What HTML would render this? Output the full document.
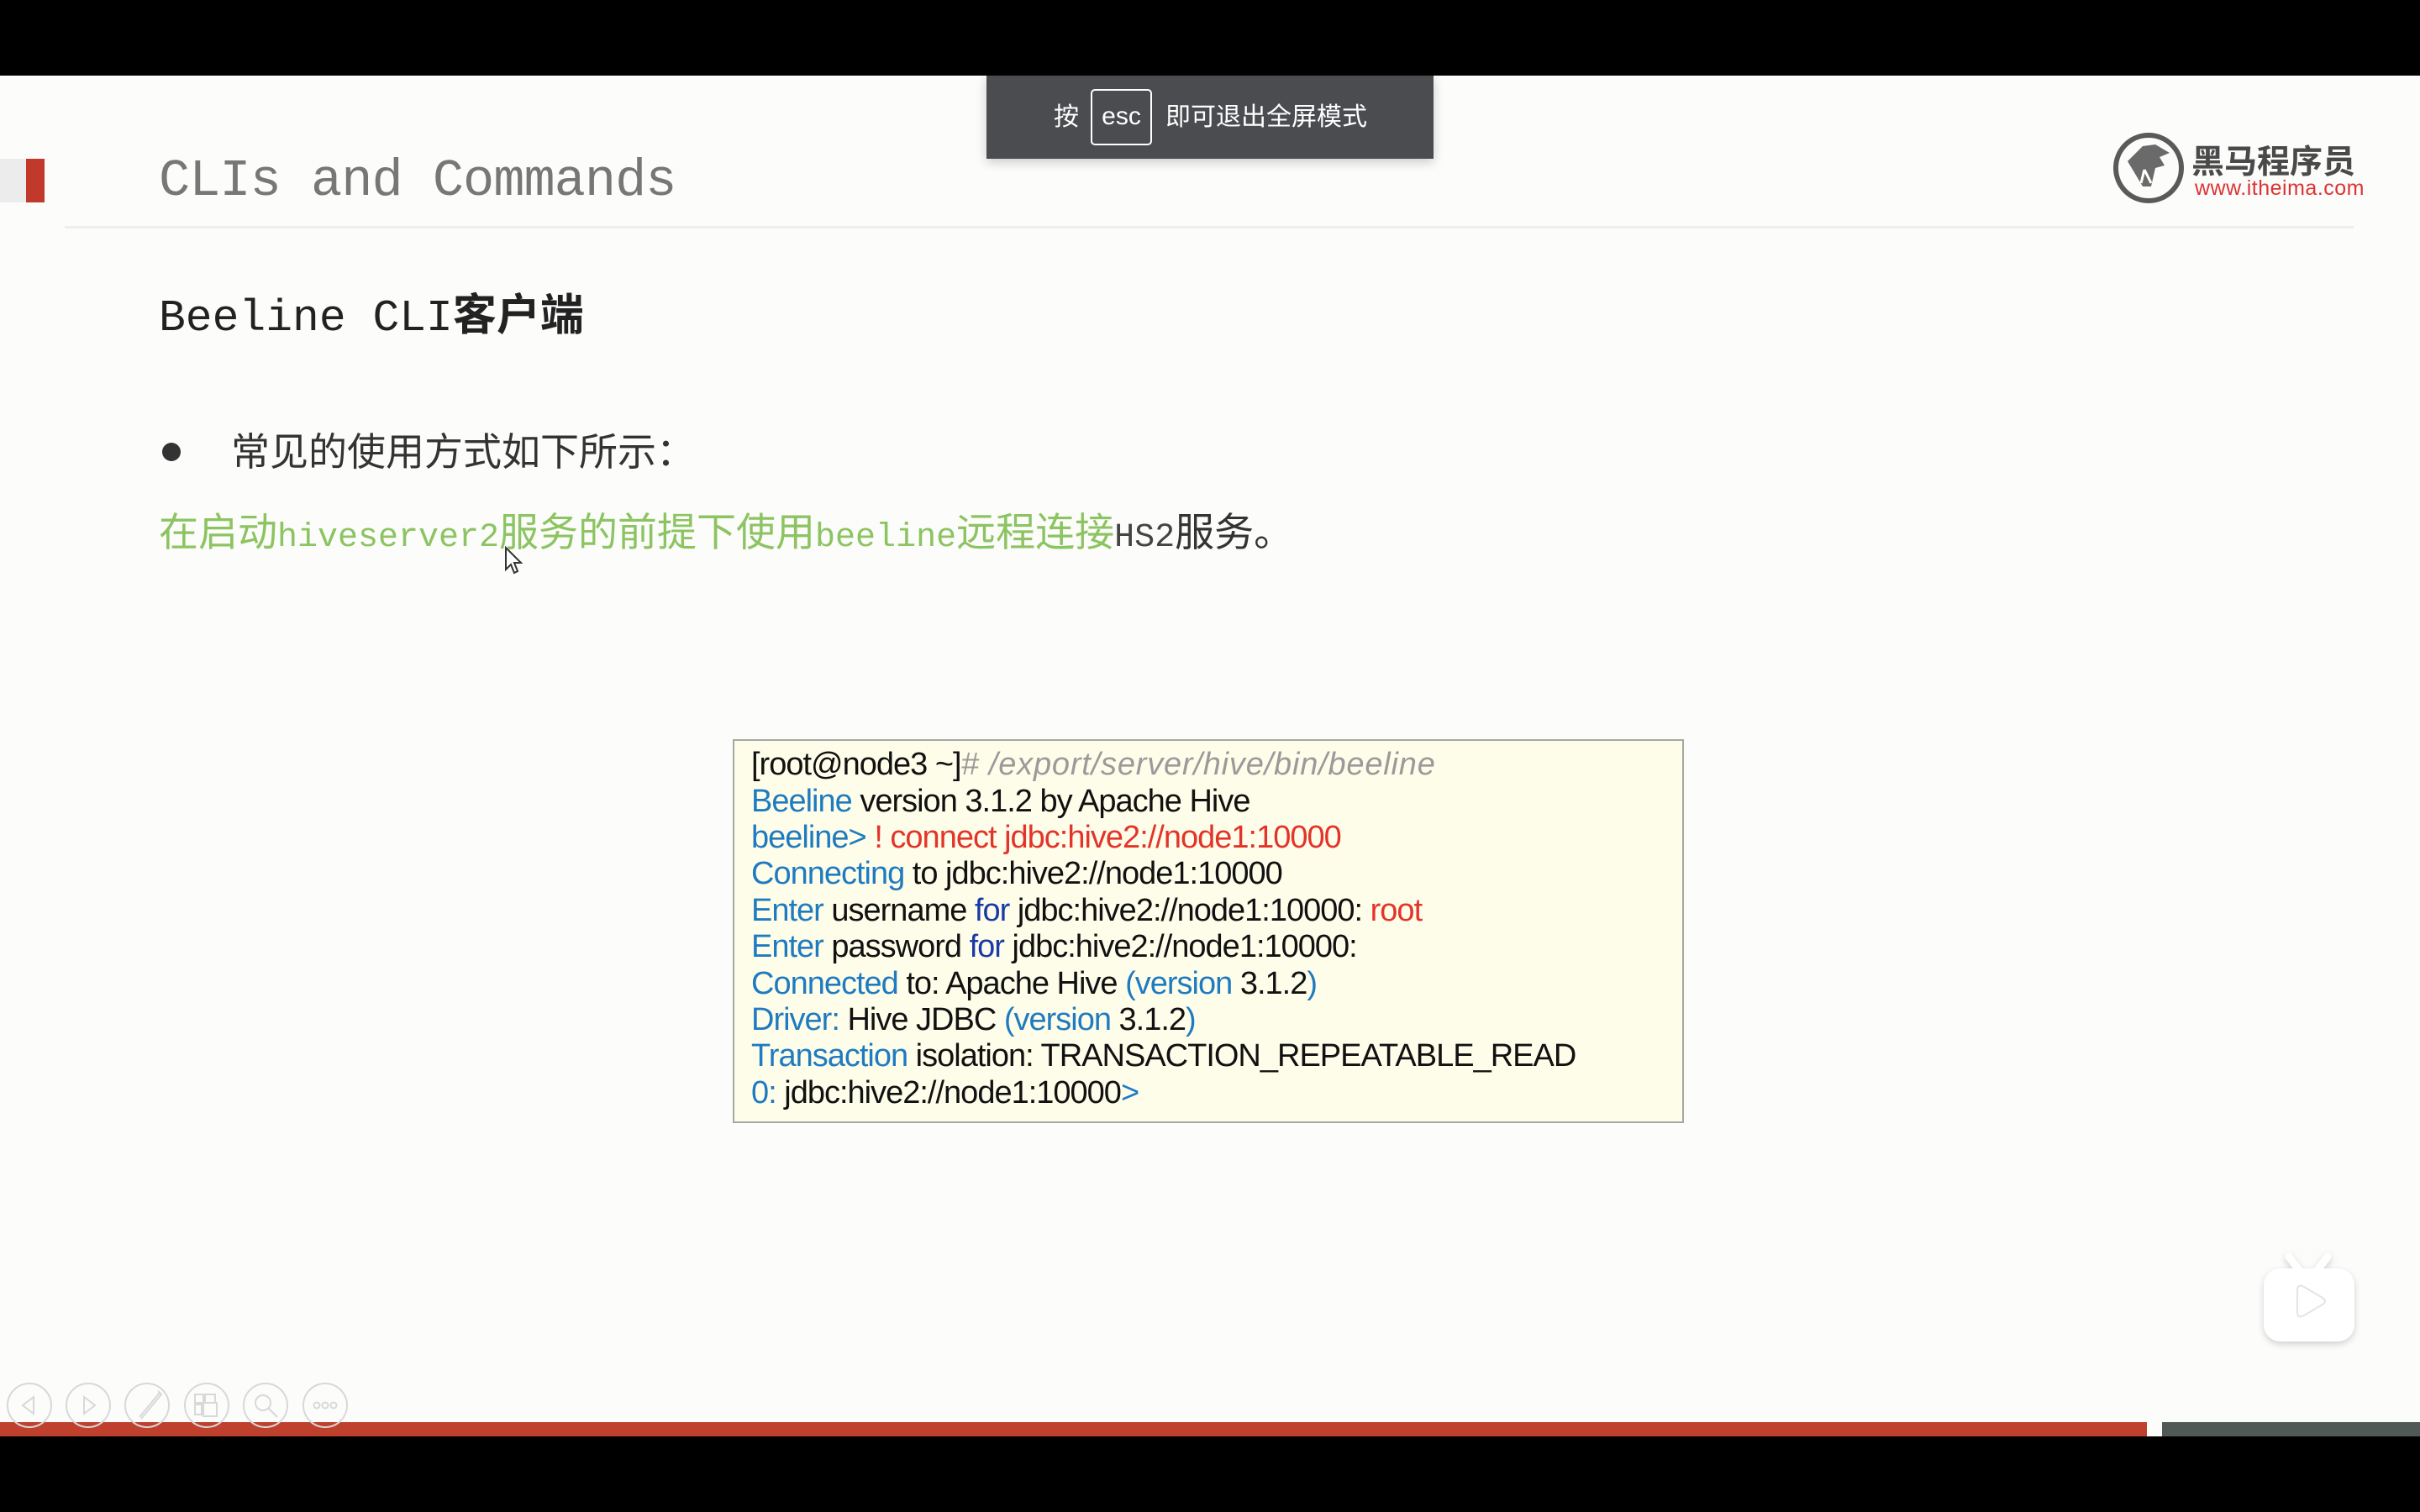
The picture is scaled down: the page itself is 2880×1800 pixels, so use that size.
<!DOCTYPE html>
<html><head><meta charset="utf-8"><style>
*{margin:0;padding:0;box-sizing:border-box}
body{width:2880px;height:1800px;background:#fcfcfb;position:relative;overflow:hidden;font-family:"Liberation Sans","Noto Sans CJK SC",sans-serif}
.abs{position:absolute;white-space:nowrap}
.mono{font-family:"Liberation Mono","Noto Sans CJK SC",monospace}
.code{position:absolute;left:872px;top:880px;width:1132px;height:457px;background:#fefdea;border:2px solid #a8a8a0}
.code div{position:absolute;left:20px;font-size:38px;letter-spacing:-1px;color:#111;white-space:nowrap;line-height:44px}
.b{color:#1f7bc0}.d{color:#1a3aa8}.r{color:#e3342a}.g{color:#9a9a9a;font-style:italic;letter-spacing:0.8px}
</style></head><body>
<div class="abs" style="left:0;top:0;width:2880px;height:90px;background:#000"></div>
<div class="abs" style="left:0;top:1710px;width:2880px;height:90px;background:#000"></div>
<div class="abs" style="left:0;top:1693px;width:2555px;height:17px;background:#c0402e"></div>
<div class="abs" style="left:2573px;top:1693px;width:307px;height:17px;background:#515957"></div>

<div class="abs" style="left:0;top:189px;width:31px;height:52px;background:#ececec"></div>
<div class="abs" style="left:31px;top:189px;width:22px;height:52px;background:#c0392b"></div>
<div class="abs mono" style="left:189px;top:176px;font-size:62px;line-height:80px;color:#777;letter-spacing:-1px">CLIs and Commands</div>
<div class="abs" style="left:77px;top:269px;width:2724px;height:3px;background:#eeeeee"></div>

<div class="abs mono" style="left:189px;top:338px;font-size:53px;line-height:66px;color:#222">Beeline CLI<b style="font-family:'Noto Sans CJK SC',sans-serif;font-size:52px">客户端</b></div>

<div class="abs" style="left:193px;top:527px;width:22px;height:22px;border-radius:50%;background:#333"></div>
<div class="abs" style="left:275px;top:505px;font-size:46px;line-height:66px;color:#333">常见的使用方式如下所示：</div>

<div class="abs" style="left:189px;top:601px;font-size:47px;line-height:66px;color:#8cc461">在启动<span class="mono" style="font-size:40px">hiveserver2</span>服务的前提下使用<span class="mono" style="font-size:40px">beeline</span>远程连接<span class="mono" style="font-size:40px;color:#444">HS2</span><span style="color:#333">服务。</span></div>
<svg class="abs" style="left:600px;top:650px" width="24" height="34" viewBox="0 0 12 17"><path d="M1 1 L1 14 L4 11 L6 16 L8 15 L6 10 L10 10 Z" fill="#fff" stroke="#333" stroke-width="1"/></svg>

<div class="code">
<div style="top:6px">[root@node3 ~]<span class="g"># /export/server/hive/bin/beeline</span></div>
<div style="top:50px"><span class="b">Beeline</span> version 3.1.2 by Apache Hive</div>
<div style="top:93px"><span class="b">beeline&gt;</span> <span class="r">! connect jdbc:hive2://node1:10000</span></div>
<div style="top:136px"><span class="b">Connecting</span> to jdbc:hive2://node1:10000</div>
<div style="top:180px"><span class="b">Enter</span> username <span class="d">for</span> jdbc:hive2://node1:10000: <span class="r">root</span></div>
<div style="top:223px"><span class="b">Enter</span> password <span class="d">for</span> jdbc:hive2://node1:10000:</div>
<div style="top:267px"><span class="b">Connected</span> to: Apache Hive <span class="b">(version</span> 3.1.2<span class="b">)</span></div>
<div style="top:310px"><span class="b">Driver:</span> Hive JDBC <span class="b">(version</span> 3.1.2<span class="b">)</span></div>
<div style="top:353px"><span class="b">Transaction</span> isolation: TRANSACTION_REPEATABLE_READ</div>
<div style="top:397px"><span class="b">0:</span> jdbc:hive2://node1:10000<span class="b">&gt;</span></div>
</div>

<svg class="abs" style="left:2510px;top:152px" width="95" height="95" viewBox="0 0 95 95"><circle cx="47" cy="48" r="39" fill="none" stroke="#5a5a5a" stroke-width="6"/><path d="M22 40 L40 22 L55 20 L72 30 L60 35 L66 45 L55 48 L50 70 L40 70 Z" fill="#6a6a6a"/><path d="M42 50 L38 66 M42 50 L50 66" stroke="#fff" stroke-width="3" fill="none"/></svg>
<div class="abs" style="left:2608px;top:166px;font-size:39px;line-height:48px;font-weight:bold;color:#4a4a4a;font-family:'Noto Sans CJK SC',sans-serif">黑马程序员</div>
<div class="abs" style="left:2612px;top:210px;font-size:25px;line-height:28px;color:#d33;letter-spacing:0.5px">www.itheima.com</div>

<div class="abs" style="left:1174px;top:90px;width:532px;height:99px;background:#4a4c50;box-shadow:0 4px 12px rgba(0,0,0,.2)"></div>
<div class="abs" style="left:1254px;top:118px;font-size:30px;line-height:44px;color:#fff">按</div>
<div class="abs" style="left:1298px;top:106px;width:73px;height:67px;border:2px solid #fff;border-radius:5px;color:#fff;font-size:30px;line-height:62px;text-align:center">esc</div>
<div class="abs" style="left:1387px;top:118px;font-size:30px;line-height:44px;color:#fff">即可退出全屏模式</div>

<svg class="abs" style="left:0;top:1640px" width="420" height="70" viewBox="0 0 420 70" fill="none" stroke="#d8d8d8" stroke-width="2">
<circle cx="35" cy="33" r="26"/><circle cx="105" cy="33" r="26"/><circle cx="175" cy="33" r="26"/><circle cx="246" cy="33" r="26"/><circle cx="316" cy="33" r="26"/><circle cx="387" cy="33" r="26"/>
<path d="M40 23 L27 33 L40 43 Z"/><path d="M100 23 L113 33 L100 43 Z"/>
<path d="M190 18 L166 47 M188 16 L192 20 L168 49"/>
<rect x="232" y="20" width="10" height="10"/><rect x="244" y="20" width="12" height="10"/><rect x="232" y="32" width="8" height="12"/><rect x="242" y="30" width="16" height="16"/>
<circle cx="313" cy="30" r="9"/><path d="M320 37 L330 47"/>
<circle cx="377" cy="33" r="3.5"/><circle cx="387" cy="33" r="3.5"/><circle cx="397" cy="33" r="3.5"/>
</svg>

<svg class="abs" style="left:2680px;top:1488px" width="135" height="120" viewBox="0 0 135 120">
<defs><filter id="s" x="-20%" y="-20%" width="140%" height="150%"><feDropShadow dx="0" dy="3" stdDeviation="4" flood-opacity="0.18"/></filter></defs>
<g filter="url(#s)"><path d="M44 8 L56 24 M90 8 L78 24" stroke="#fff" stroke-width="9" stroke-linecap="round"/>
<rect x="14" y="22" width="108" height="87" rx="20" fill="#fff"/></g>
<path d="M54 48 Q54 40 62 44 L84 57 Q90 61 84 65 L62 78 Q54 82 54 74 Z" fill="#fff" stroke="#e4e4e4" stroke-width="2"/>
</svg>
</body></html>
